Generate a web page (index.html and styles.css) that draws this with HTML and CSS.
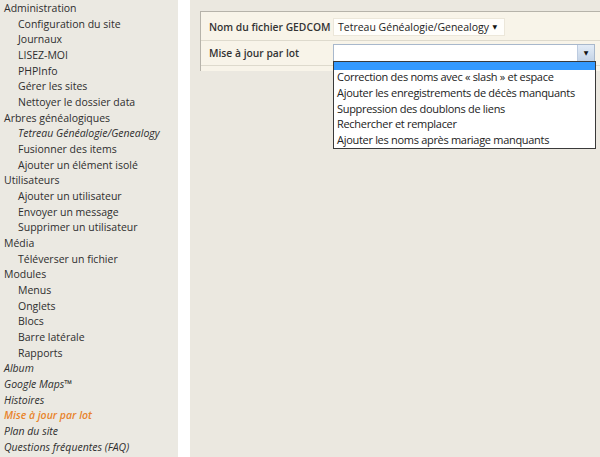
FILE: index.html
```html
<!DOCTYPE html>
<html lang="fr">
<head>
<meta charset="utf-8">
<title>Mise à jour par lot</title>
<link rel="stylesheet" href="styles.css">
</head>
<body>
<aside class="sidebar">
  <ul class="menu">
    <li class="top">Administration</li>
    <li class="sub">Configuration du site</li>
    <li class="sub">Journaux</li>
    <li class="sub">LISEZ-MOI</li>
    <li class="sub">PHPInfo</li>
    <li class="sub">Gérer les sites</li>
    <li class="sub">Nettoyer le dossier data</li>
    <li class="top">Arbres généalogiques</li>
    <li class="sub it">Tetreau Généalogie/Genealogy</li>
    <li class="sub">Fusionner des items</li>
    <li class="sub">Ajouter un élément isolé</li>
    <li class="top">Utilisateurs</li>
    <li class="sub">Ajouter un utilisateur</li>
    <li class="sub">Envoyer un message</li>
    <li class="sub">Supprimer un utilisateur</li>
    <li class="top">Média</li>
    <li class="sub">Téléverser un fichier</li>
    <li class="top">Modules</li>
    <li class="sub">Menus</li>
    <li class="sub">Onglets</li>
    <li class="sub">Blocs</li>
    <li class="sub">Barre latérale</li>
    <li class="sub">Rapports</li>
    <li class="top it">Album</li>
    <li class="top it">Google Maps™</li>
    <li class="top it">Histoires</li>
    <li class="top it active">Mise à jour par lot</li>
    <li class="top it">Plan du site</li>
    <li class="top it">Questions fréquentes (FAQ)</li>
  </ul>
</aside>
<div class="divider"></div>
<main class="content">
  <div class="panel">
    <div class="row first">
      <div class="label">Nom du fichier GEDCOM</div>
      <div class="field">
        <div class="select small"><span>Tetreau Généalogie/Genealogy</span><span class="caret">▼</span></div>
      </div>
    </div>
    <div class="row second">
      <div class="label">Mise à jour par lot</div>
      <div class="field">
        <div class="select wide"><span></span><span class="btn"><span class="caret">▼</span></span></div>
        <ul class="dropdown">
          <li class="hl"></li>
          <li>Correction des noms avec « slash » et espace</li>
          <li>Ajouter les enregistrements de décès manquants</li>
          <li>Suppression des doublons de liens</li>
          <li>Rechercher et remplacer</li>
          <li>Ajouter les noms après mariage manquants</li>
        </ul>
      </div>
    </div>
  </div>
</main>
</body>
</html>
```
FILE: styles.css
```css
html, body {
  margin: 0;
  padding: 0;
}
body {
  display: flex;
  width: 600px;
  height: 457px;
  overflow: hidden;
  font-family: "Open Sans", "DejaVu Sans", sans-serif;
  font-size: 10.5px;
  color: #2e2e2e;
  background: #ffffff;
}
.sidebar {
  width: 178px;
  flex: none;
  background: #ebe9e2;
}
.menu {
  list-style: none;
  margin: 0;
  padding: 1px 0 0 0;
}
.menu li {
  height: 15.68px;
  line-height: 15.68px;
  white-space: nowrap;
}
.menu .top { padding-left: 4px; }
.menu .sub { padding-left: 18px; }
.menu .it { font-style: italic; }
.menu .active { color: #e8842c; font-weight: 600; }
.divider {
  width: 12px;
  flex: none;
  background: #ffffff;
}
.content {
  flex: 1;
  background: #ebe8e0;
  padding: 11px 0 0 10px;
}
.panel {
  border-top: 1px solid #b6b3aa;
  border-left: 1px solid #b6b3aa;
  background: #f8f4e9;
  padding-bottom: 5px;
}
.row {
  display: flex;
  align-items: center;
  border-bottom: 1px solid #dedacd;
}
.row.first { padding-top: 1px; box-sizing: border-box; height: 29px; }
.row.second { height: 24px; }
.label {
  width: 124px;
  padding-left: 8px;
  flex: none;
  font-weight: 600;
  font-size: 10.3px;
  color: #333;
}
.field {
  position: relative;
  flex: 1;
}
.select {
  display: flex;
  align-items: center;
  justify-content: space-between;
  box-sizing: border-box;
  background: #fffefb;
  color: #222;
}
.select.small {
  width: 172px;
  height: 18px;
  padding: 0 7px 0 4px;
  border: 1px solid #ece7da;
}
.select.wide {
  width: 262px;
  height: 18px;
  border: 1px solid #a8b8cc;
  background: #ffffff;
}
.caret {
  font-size: 6px;
  color: #111;
}
.btn {
  width: 16px;
  height: 16px;
  display: flex;
  align-items: center;
  justify-content: center;
  background: linear-gradient(#e3ecf7, #c4d3e6);
  border-left: 1px solid #bccbe0;
}
.dropdown {
  position: absolute;
  left: 0;
  top: 17px;
  width: 263px;
  box-sizing: border-box;
  list-style: none;
  margin: 0;
  padding: 0;
  background: #ffffff;
  border: 1px solid #3a3a3a;
  color: #222;
  font-size: 11px;
  letter-spacing: -0.3px;
  z-index: 2;
}
.dropdown li {
  height: 15.8px;
  line-height: 15.8px;
  padding-left: 3px;
  white-space: nowrap;
}
.dropdown li.hl {
  height: 8px;
  background: #3399ff;
  margin-bottom: -1px;
}
```
